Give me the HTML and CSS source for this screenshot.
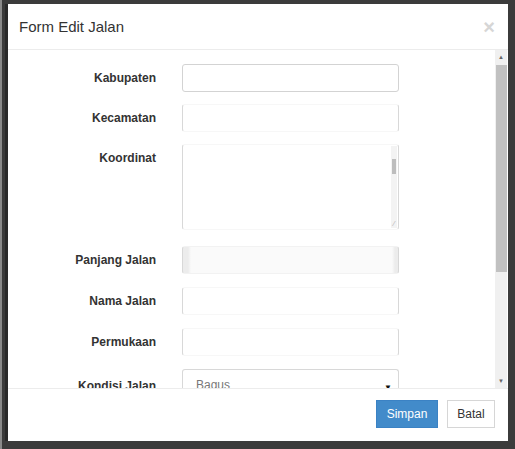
FILE: index.html
```html
<!DOCTYPE html>
<html>
<head>
<meta charset="utf-8">
<link rel="stylesheet" href="styles.css">
</head>
<body>
<div class="modal">
  <div class="modal-header">
    <h4 class="title">Form Edit Jalan</h4>
    <span class="close">×</span>
  </div>
  <div class="modal-body">
    <div class="form">
      <div class="row">
        <label class="lbl">Kabupaten</label>
        <div class="input full"></div>
      </div>
      <div class="row">
        <label class="lbl">Kecamatan</label>
        <div class="input"></div>
      </div>
      <div class="row row-ta">
        <label class="lbl">Koordinat</label>
        <div class="input textarea">
          <div class="ta-scroll">
            <span class="ta-thumb"></span>
            <span class="ta-grip">⁄</span>
          </div>
        </div>
      </div>
      <div class="row row-b">
        <label class="lbl">Panjang Jalan</label>
        <div class="input disabled"></div>
      </div>
      <div class="row row-b">
        <label class="lbl">Nama Jalan</label>
        <div class="input"></div>
      </div>
      <div class="row row-b">
        <label class="lbl">Permukaan</label>
        <div class="input"></div>
      </div>
      <div class="row row-b">
        <label class="lbl lbl-low">Kondisi Jalan</label>
        <div class="input select"><span>Bagus</span><span class="caret">▼</span></div>
      </div>
    </div>
    <div class="scrollbar">
      <div class="sb-arrow">▲</div>
      <div class="sb-thumb"></div>
      <div class="sb-fill"></div>
      <div class="sb-arrow">▼</div>
    </div>
  </div>
  <div class="modal-footer">
    <button class="btn btn-primary">Simpan</button>
    <button class="btn btn-default">Batal</button>
  </div>
</div>
</body>
</html>
```

FILE: styles.css
```css
html, body {
  margin: 0;
  padding: 0;
}
body {
  width: 515px;
  height: 449px;
  background: #3b3b3b;
  box-sizing: border-box;
  padding: 4px 7px 8px 8px;
  font-family: "Liberation Sans", Arial, sans-serif;
  color: #333;
  box-shadow: inset 2px 0 0 #8a8a8a;
}
.modal {
  width: 500px;
  height: 437px;
  background: #fff;
  display: flex;
  flex-direction: column;
  box-shadow: -3px 0 0 #2a2a2a;
}
.modal-header {
  height: 46px;
  box-sizing: border-box;
  border-bottom: 1px solid #ececec;
  padding: 14px 13px 0 11px;
  display: flex;
  justify-content: space-between;
  align-items: flex-start;
}
.title {
  margin: 0;
  font-size: 15px;
  font-weight: normal;
  line-height: 17px;
  color: #333;
}
.close {
  font-size: 20px;
  font-weight: bold;
  line-height: 17px;
  color: #d6d6d6;
  margin-top: 1px;
}
.modal-body {
  height: 338px;
  display: flex;
  overflow: hidden;
  border-bottom: 1px solid #ececec;
}
.form {
  width: 487px;
  padding-top: 14px;
}
.row {
  display: grid;
  grid-template-columns: 148px 217px;
  column-gap: 26px;
  align-items: start;
  margin-bottom: 12px;
}
.row-ta {
  margin-bottom: 16px;
}
.row-b {
  margin-bottom: 13px;
}
.lbl {
  text-align: right;
  font-size: 12px;
  font-weight: bold;
  line-height: 14px;
  padding-top: 7px;
  color: #333;
}
.lbl-low {
  padding-top: 10px;
}
.input {
  height: 28px;
  box-sizing: border-box;
  border: 1px solid #f7f7f7;
  border-left-color: #d8d8d8;
  border-right-color: #d8d8d8;
  border-radius: 3px;
  background: #fff;
}
.input.full {
  border-color: #d3d3d3;
}
.input.disabled {
  background: linear-gradient(to right, #ececec 0, #ececec 5px, #fafafa 8px, #fafafa 209px, #ececec 212px);
  border-color: #f2f2f2;
  border-left-color: #d8d8d8;
  border-right-color: #d8d8d8;
}
.textarea {
  height: 86px;
  display: flex;
  justify-content: flex-end;
  padding: 1px 1px 1px 0;
}
.ta-scroll {
  width: 6px;
  background: #f3f3f3;
  display: flex;
  flex-direction: column;
  align-items: center;
}
.ta-thumb {
  display: block;
  width: 4px;
  height: 15px;
  margin-top: 13px;
  background: #bdbdbd;
}
.ta-grip {
  margin-top: auto;
  font-size: 7px;
  line-height: 8px;
  color: #aaa;
}
.select {
  display: flex;
  justify-content: space-between;
  align-items: flex-start;
  padding: 8px 6px 0 13px;
  font-size: 12px;
  line-height: 14px;
  color: #777;
  border-top-color: #d8d8d8;
}
.caret {
  font-size: 8px;
  color: #111;
  margin-top: 3px;
}
.scrollbar {
  width: 12px;
  background: #f0f0f0;
  display: flex;
  flex-direction: column;
  align-items: center;
}
.sb-arrow {
  height: 14px;
  font-size: 6px;
  line-height: 14px;
  color: #666;
}
.sb-thumb {
  width: 11px;
  height: 207px;
  margin-top: 1px;
  background: #c1c1c1;
}
.sb-fill {
  flex: 1;
}
.modal-footer {
  flex: 1;
  display: flex;
  justify-content: flex-end;
  align-items: flex-start;
  gap: 9px;
  padding: 11px 13px 0 0;
}
.btn {
  font-family: "Liberation Sans", Arial, sans-serif;
  font-size: 12px;
  height: 28px;
  box-sizing: border-box;
  border-radius: 0;
  cursor: pointer;
  margin: 0;
}
.btn-primary {
  width: 62px;
  background: #428bca;
  border: 1px solid #3b82c4;
  color: #fff;
}
.btn-default {
  width: 48px;
  background: #fff;
  border: 1px solid #d6d6d6;
  color: #333;
}
```
